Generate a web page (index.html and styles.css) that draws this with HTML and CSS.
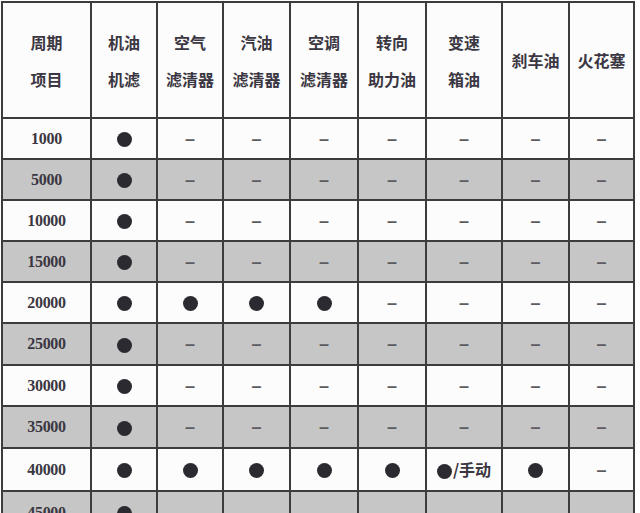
FILE: index.html
```html
<!DOCTYPE html>
<html lang="zh-CN">
<head>
<meta charset="utf-8">
<title>保养周期表</title>
<link rel="stylesheet" href="styles.css">
</head>
<body>
<table class="sched">
  <colgroup>
    <col class="c1"><col class="c2"><col class="c3"><col class="c4"><col class="c5"><col class="c6"><col class="c7"><col class="c8"><col class="c9">
  </colgroup>
  <thead>
    <tr class="head">
      <th>周期<br>项目</th>
      <th>机油<br>机滤</th>
      <th>空气<br>滤清器</th>
      <th>汽油<br>滤清器</th>
      <th>空调<br>滤清器</th>
      <th>转向<br>助力油</th>
      <th>变速<br>箱油</th>
      <th>刹车油</th>
      <th>火花塞</th>
    </tr>
  </thead>
  <tbody>
    <tr class="r39"><td class="km">1000</td><td><span class="dot"></span></td><td class="na">–</td><td class="na">–</td><td class="na">–</td><td class="na">–</td><td class="na">–</td><td class="na">–</td><td class="na">–</td></tr>
    <tr class="r39 alt"><td class="km">5000</td><td><span class="dot"></span></td><td class="na">–</td><td class="na">–</td><td class="na">–</td><td class="na">–</td><td class="na">–</td><td class="na">–</td><td class="na">–</td></tr>
    <tr class="r39"><td class="km">10000</td><td><span class="dot"></span></td><td class="na">–</td><td class="na">–</td><td class="na">–</td><td class="na">–</td><td class="na">–</td><td class="na">–</td><td class="na">–</td></tr>
    <tr class="r39 alt"><td class="km">15000</td><td><span class="dot"></span></td><td class="na">–</td><td class="na">–</td><td class="na">–</td><td class="na">–</td><td class="na">–</td><td class="na">–</td><td class="na">–</td></tr>
    <tr class="r39"><td class="km">20000</td><td><span class="dot"></span></td><td><span class="dot"></span></td><td><span class="dot"></span></td><td><span class="dot"></span></td><td class="na">–</td><td class="na">–</td><td class="na">–</td><td class="na">–</td></tr>
    <tr class="r40 alt"><td class="km">25000</td><td><span class="dot"></span></td><td class="na">–</td><td class="na">–</td><td class="na">–</td><td class="na">–</td><td class="na">–</td><td class="na">–</td><td class="na">–</td></tr>
    <tr class="r39"><td class="km">30000</td><td><span class="dot"></span></td><td class="na">–</td><td class="na">–</td><td class="na">–</td><td class="na">–</td><td class="na">–</td><td class="na">–</td><td class="na">–</td></tr>
    <tr class="r40 alt"><td class="km">35000</td><td><span class="dot"></span></td><td class="na">–</td><td class="na">–</td><td class="na">–</td><td class="na">–</td><td class="na">–</td><td class="na">–</td><td class="na">–</td></tr>
    <tr class="r41"><td class="km">40000</td><td><span class="dot"></span></td><td><span class="dot"></span></td><td><span class="dot"></span></td><td><span class="dot"></span></td><td><span class="dot"></span></td><td class="mix"><span class="dot"></span>/手动</td><td><span class="dot"></span></td><td class="na">–</td></tr>
    <tr class="r41 alt"><td class="km">45000</td><td><span class="dot"></span></td><td class="na">–</td><td class="na">–</td><td class="na">–</td><td class="na">–</td><td class="na">–</td><td class="na">–</td><td class="na">–</td></tr>
  </tbody>
</table>
</body>
</html>
```
FILE: styles.css
```css
html, body {
  margin: 0;
  padding: 0;
  background: #ffffff;
}
body {
  padding: 1px 0 0 1px;
  overflow: hidden;
  height: 512px;
}
.sched {
  table-layout: fixed;
  width: 634px;
  border-collapse: separate;
  border-spacing: 2px;
  background: #3c3c3e;
  color: #3b3742;
}
.c1 { width: 87px; }
.c2 { width: 64px; }
.c3 { width: 64px; }
.c4 { width: 65px; }
.c5 { width: 66px; }
.c6 { width: 66px; }
.c7 { width: 74px; }
.c8 { width: 65px; }
.c9 { width: 63px; }
.sched th,
.sched td {
  padding: 0;
  background: #fcfcfc;
  text-align: center;
  vertical-align: middle;
  white-space: nowrap;
}
.sched th {
  font-family: "Noto Sans CJK SC", "Noto Sans", sans-serif;
  font-weight: 700;
  font-size: 16px;
  line-height: 37px;
  padding-top: 1px;
}
.head { height: 114px; }
.r39 { height: 39px; }
.r40 { height: 40px; }
.r41 { height: 41px; }
.sched .alt td { background: #c6c6c6; }
.km {
  font-family: "Liberation Serif", serif;
  font-size: 16px;
  font-weight: 700;
  letter-spacing: -0.3px;
  line-height: 20px;
}
.na {
  font-family: "Liberation Sans", sans-serif;
  font-weight: 700;
  font-size: 18px;
  line-height: 20px;
  color: #5c5c60;
}
.dot {
  display: inline-block;
  width: 15px;
  height: 15px;
  border-radius: 50%;
  background: #2b2a30;
  vertical-align: middle;
}
.mix {
  font-family: "Noto Sans CJK SC", "Noto Sans", sans-serif;
  font-weight: 700;
  font-size: 16px;
  line-height: 20px;
}
.mix .dot { margin-right: 1px; position: relative; top: -1px; }
```
